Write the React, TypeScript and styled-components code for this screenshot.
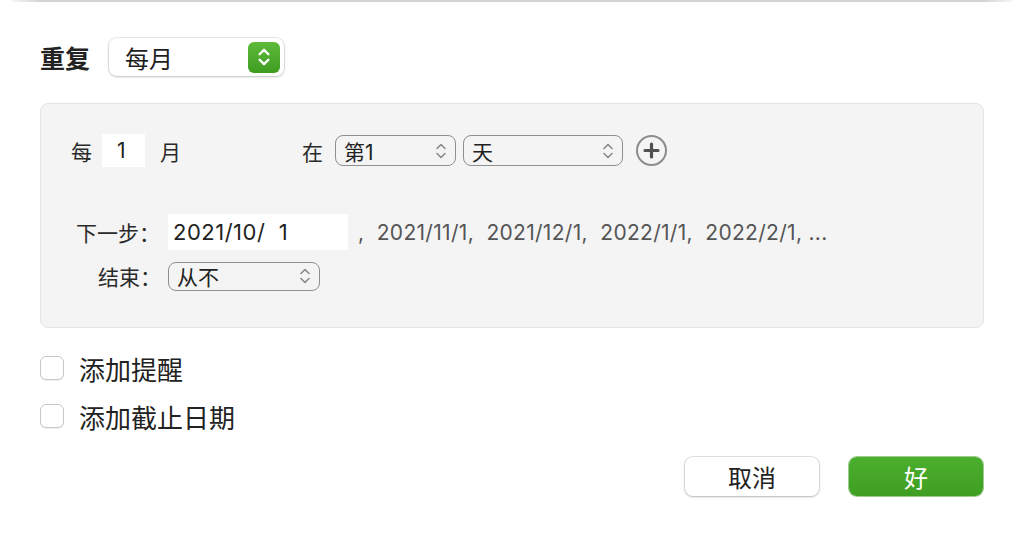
import React from "react";
import styled, { createGlobalStyle } from "styled-components";

const Global = createGlobalStyle`
  html, body { margin: 0; padding: 0; background: #ffffff; }
  body {
    font-family: Inter, "Noto Sans CJK SC", "Noto Sans", sans-serif;
    color: #222;
    width: 1024px;
    height: 536px;
    overflow: hidden;
  }
`;

const Page = styled.div`
  width: 1024px;
  height: 536px;
  display: flex;
  flex-direction: column;
`;

const TopRule = styled.div`
  margin: 0 12px 0 12px;
  height: 2px;
  background: linear-gradient(to right, #f4f4f4 0%, #d2d2d2 3%, #d2d2d2 97%, #f4f4f4 100%);
`;

const Body = styled.div`
  padding: 0 40px;
  display: flex;
  flex-direction: column;
`;

const RepeatRow = styled.div`
  margin-top: 36px;
  display: flex;
  align-items: center;
  gap: 19px;
  height: 38px;
`;

const BoldLabel = styled.span`
  font-size: 25px;
  font-weight: 700;
  color: #222;
`;

const PopupButton = styled.div`
  width: 175px;
  height: 38px;
  box-sizing: border-box;
  border-radius: 8px;
  background: #fff;
  box-shadow: 0 0 0 1px rgba(0,0,0,0.08), 0 1px 3px rgba(0,0,0,0.18);
  display: flex;
  align-items: center;
  justify-content: space-between;
  padding: 0 4px 0 16px;
  font-size: 24px;
  color: #1e1e1e;
`;

const GreenStepper = styled.div`
  width: 32px;
  height: 31px;
  border-radius: 6px;
  background: linear-gradient(#5dbb3a, #3f9c22);
  display: flex;
  align-items: center;
  justify-content: center;
`;

const Panel = styled.div`
  margin-top: 27px;
  height: 225px;
  box-sizing: border-box;
  background: #f4f4f4;
  border: 1px solid #e4e4e4;
  border-radius: 8px;
  padding: 30px 0 0 29px;
  display: flex;
  flex-direction: column;
`;

const Row = styled.div<{ $mt?: number; $h: number }>`
  display: flex;
  align-items: center;
  height: ${(p) => p.$h}px;
  margin-top: ${(p) => p.$mt ?? 0}px;
  font-size: 21px;
  color: #2a2a2a;
`;

const Word = styled.span<{ $ml?: number }>`
  margin-left: ${(p) => p.$ml ?? 0}px;
  white-space: pre;
`;

const Field = styled.div<{ $w: number; $h: number; $ml: number; $pl: number }>`
  width: ${(p) => p.$w}px;
  height: ${(p) => p.$h}px;
  margin-left: ${(p) => p.$ml}px;
  padding-left: ${(p) => p.$pl}px;
  box-sizing: border-box;
  background: #fff;
  display: flex;
  align-items: center;
  font-size: 21px;
  color: #222;
  white-space: pre;
`;

const DateValue = styled.span`
  font-size: 22px;
  letter-spacing: 0.5px;
`;

const Select = styled.div<{ $w: number; $h: number; $ml: number }>`
  width: ${(p) => p.$w}px;
  height: ${(p) => p.$h}px;
  margin-left: ${(p) => p.$ml}px;
  box-sizing: border-box;
  border: 1.5px solid #8f8f8f;
  border-radius: 8px;
  display: flex;
  align-items: center;
  justify-content: space-between;
  padding: 0 8px 0 8px;
  font-size: 21px;
  color: #222;
`;

const PlusButton = styled.div`
  margin-left: 13px;
  width: 31px;
  height: 31px;
  box-sizing: border-box;
  border: 2px solid #8c8c8c;
  border-radius: 50%;
  display: flex;
  align-items: center;
  justify-content: center;
`;

const LabelCell = styled.span<{ $indent: number }>`
  box-sizing: border-box;
  padding-left: ${(p) => p.$indent}px;
  width: 90px;
  white-space: pre;
  font-size: 21px;
`;

const Dates = styled.span`
  margin-left: 10px;
  color: #555;
  font-size: 21px;
  letter-spacing: 0.3px;
  white-space: pre;
`;

const CheckRow = styled.div<{ $mt: number }>`
  margin-top: ${(p) => p.$mt}px;
  display: flex;
  align-items: center;
  gap: 15px;
  height: 24px;
  font-size: 26px;
  color: #222;
`;

const CheckBox = styled.div`
  width: 24px;
  height: 24px;
  box-sizing: border-box;
  border: 1px solid #c8c8c8;
  border-radius: 6px;
  background: #fff;
  box-shadow: 0 1px 1px rgba(0,0,0,0.06);
`;

const Buttons = styled.div`
  margin-top: 29px;
  display: flex;
  justify-content: flex-end;
  gap: 30px;
  padding-right: 1px;
`;

const Button = styled.div<{ $primary?: boolean }>`
  width: 134px;
  height: 39px;
  box-sizing: border-box;
  border-radius: 8px;
  display: flex;
  align-items: center;
  justify-content: center;
  font-size: 24px;
  color: ${(p) => (p.$primary ? "#fff" : "#222")};
  background: ${(p) => (p.$primary ? "linear-gradient(#4caf2d, #3f9e22)" : "#fff")};
  box-shadow: ${(p) =>
    p.$primary
      ? "0 0 0 1px rgba(60,150,30,0.5)"
      : "0 0 0 1px rgba(0,0,0,0.1), 0 1px 3px rgba(0,0,0,0.2)"};
`;

const Chevrons = ({ color, w = 12, h = 20, sw = 1.6 }: { color: string; w?: number; h?: number; sw?: number }) => (
  <svg width={w} height={h} viewBox="0 0 12 20" fill="none">
    <path d="M2 7.5 L6 3.5 L10 7.5" stroke={color} strokeWidth={sw} strokeLinecap="round" strokeLinejoin="round" />
    <path d="M2 12.5 L6 16.5 L10 12.5" stroke={color} strokeWidth={sw} strokeLinecap="round" strokeLinejoin="round" />
  </svg>
);

const Plus = () => (
  <svg width="17" height="17" viewBox="0 0 17 17">
    <path d="M8.5 2 V15 M2 8.5 H15" stroke="#505050" strokeWidth="3.2" strokeLinecap="round" />
  </svg>
);

export default function App() {
  return (
    <Page>
      <Global />
      <TopRule />
      <Body>
        <RepeatRow>
          <BoldLabel>重复</BoldLabel>
          <PopupButton>
            <span>每月</span>
            <GreenStepper>
              <Chevrons color="#fff" w={14} h={22} sw={2.2} />
            </GreenStepper>
          </PopupButton>
        </RepeatRow>

        <Panel>
          <Row $h={33}>
            <Word $ml={1}>每</Word>
            <Field $w={43} $h={33} $ml={10} $pl={15}>1</Field>
            <Word $ml={15}>月</Word>
            <Word $ml={121}>在</Word>
            <Select $w={121} $h={31} $ml={12}>
              <span>第1</span>
              <Chevrons color="#8a8a8a" />
            </Select>
            <Select $w={160} $h={31} $ml={7}>
              <span>天</span>
              <Chevrons color="#8a8a8a" />
            </Select>
            <PlusButton>
              <Plus />
            </PlusButton>
          </Row>

          <Row $h={36} $mt={47}>
            <LabelCell $indent={6}>下一步：</LabelCell>
            <Field $w={180} $h={36} $ml={8} $pl={5}>
              <DateValue>2021/10/  1</DateValue>
            </Field>
            <Dates>,  2021/11/1,  2021/12/1,  2022/1/1,  2022/2/1, ...</Dates>
          </Row>

          <Row $h={28} $mt={12}>
            <LabelCell $indent={28}>结束：</LabelCell>
            <Select $w={152} $h={29} $ml={8}>
              <span>从不</span>
              <Chevrons color="#8a8a8a" />
            </Select>
          </Row>
        </Panel>

        <CheckRow $mt={28}>
          <CheckBox />
          <span>添加提醒</span>
        </CheckRow>
        <CheckRow $mt={24}>
          <CheckBox />
          <span>添加截止日期</span>
        </CheckRow>

        <Buttons>
          <Button>取消</Button>
          <Button $primary>好</Button>
        </Buttons>
      </Body>
    </Page>
  );
}
